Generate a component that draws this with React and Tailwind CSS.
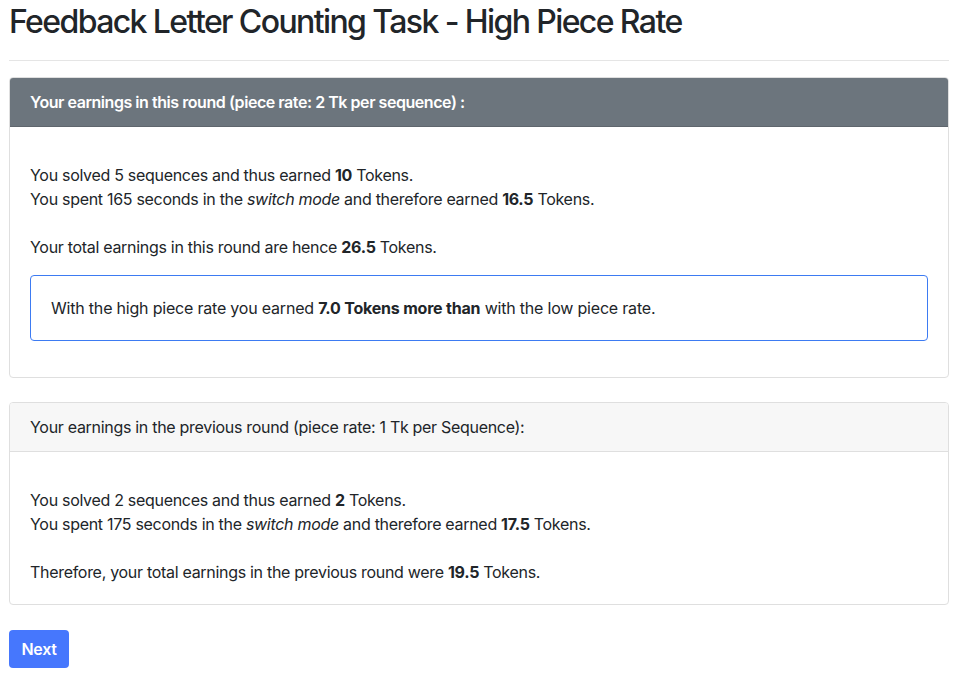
export default function App() {
  return (
    <div className="bg-white min-h-screen text-[#212529]" style={{ fontFamily: 'Inter, "Liberation Sans", Arial, sans-serif' }}>
      <div className="w-[940px] ml-[9px]">
        <h2 className="text-[32px] leading-[38px] font-medium pt-[3px] text-[#212529] tracking-[-1.6px]">
          Feedback Letter Counting Task - High Piece Rate
        </h2>
        <hr className="mt-[19px] mb-4 border-0 border-t border-[#e5e5e5]" />
        <div className="border border-[#dfdfdf] rounded-[4px] overflow-hidden">
          <div className="bg-[#6c757d] text-white font-semibold text-base leading-6 px-5 py-3 border-b border-[#5f666d] tracking-[-0.45px]">
            Your earnings in this round (piece rate: 2 Tk per sequence) :
          </div>
          <div className="px-5 pt-9 pb-5 text-base leading-6 tracking-[-0.3px]">
            <p>
              You solved 5 sequences and thus earned <b>10</b> Tokens.
              <br />
              You spent 165 seconds in the <i>switch mode</i> and therefore earned <b>16.5</b> Tokens.
              <br />
              <br />
              Your total earnings in this round are hence <b>26.5</b> Tokens.
            </p>
            <div className="mt-4 mb-4 border border-[#3d7bf2] rounded-[4px] px-5 py-5 tracking-[-0.2px]">
              With the high piece rate you earned <b>7.0 Tokens more than</b> with the low piece rate.
            </div>
          </div>
        </div>
        <div className="mt-[24px] border border-[#dfdfdf] rounded-[4px] overflow-hidden">
          <div className="bg-[#f7f7f7] text-base leading-6 px-5 py-3 border-b border-[#dfdfdf] tracking-[-0.3px]">
            Your earnings in the previous round (piece rate: 1 Tk per Sequence):
          </div>
          <div className="px-5 pt-9 pb-5 text-base leading-6 tracking-[-0.3px]">
            <p>
              You solved 2 sequences and thus earned <b>2</b> Tokens.
              <br />
              You spent 175 seconds in the <i>switch mode</i> and therefore earned <b>17.5</b> Tokens.
              <br />
              <br />
              Therefore, your total earnings in the previous round were <b>19.5</b> Tokens.
            </p>
          </div>
        </div>
        <button className="mt-[25px] h-[38px] w-[60px] rounded-[4px] bg-[#4677fd] text-white font-semibold text-base tracking-[-0.3px]">
          Next
        </button>
      </div>
    </div>
  );
}
